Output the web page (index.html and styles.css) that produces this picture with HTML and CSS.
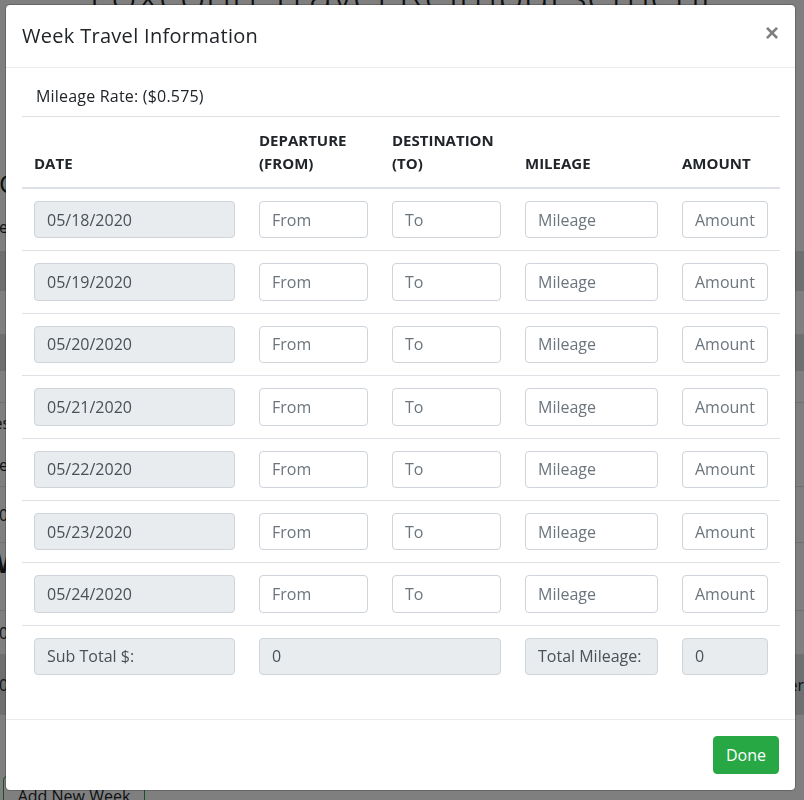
FILE: index.html
```html
<!DOCTYPE html>
<html lang="en">
<head>
<meta charset="utf-8">
<title>Week Travel Information</title>
<link rel="stylesheet" href="styles.css">
</head>
<body>
<div class="page">
  <h1 class="page-title">Foxconn Travel Reimbursement</h1>
  <div class="bg-gap g1"></div>
  <div class="bg-row h-head"><span class="bg-heading">Claim</span></div>
  <div class="bg-row h-text"><span class="bg-text">e</span></div>
  <div class="bg-row h-band dark"></div>
  <div class="bg-row h-row line"></div>
  <div class="bg-row h-band2 dark"></div>
  <div class="bg-row h-row2 line"></div>
  <div class="bg-row h-text2"><span class="bg-text cut">Desc</span></div>
  <div class="bg-row h-text3 line"><span class="bg-text">e</span></div>
  <div class="bg-row h-text4 line"><span class="bg-text">0</span></div>
  <div class="bg-row h-head2"><span class="bg-heading bold">W</span></div>
  <div class="bg-row h-row3 line"></div>
  <div class="bg-row h-text5 line"><span class="bg-text">0</span></div>
  <div class="bg-row h-text6 dark line"><span class="bg-text">0</span><span class="bg-text">er</span></div>
  <div class="bg-row h-row4"></div>
  <button class="bg-btn" type="button">Add New Week</button>
</div>

<div class="backdrop"></div>

<div class="modal">
  <div class="modal-content">
    <div class="modal-header">
      <h5 class="modal-title">Week Travel Information</h5>
      <button class="close" type="button">&times;</button>
    </div>
    <div class="modal-body">
      <label class="rate">Mileage Rate: ($0.575)</label>
      <table class="table">
        <colgroup>
          <col class="c1"><col class="c2"><col class="c3"><col class="c4"><col class="c5">
        </colgroup>
        <thead>
          <tr><th>Date</th><th>Departure (From)</th><th>Destination (To)</th><th>Mileage</th><th>Amount</th></tr>
        </thead>
        <tbody>
          <tr><td><input class="fc" value="05/18/2020" disabled></td><td><input class="fc" placeholder="From"></td><td><input class="fc" placeholder="To"></td><td><input class="fc" placeholder="Mileage"></td><td><input class="fc" placeholder="Amount"></td></tr>
          <tr><td><input class="fc" value="05/19/2020" disabled></td><td><input class="fc" placeholder="From"></td><td><input class="fc" placeholder="To"></td><td><input class="fc" placeholder="Mileage"></td><td><input class="fc" placeholder="Amount"></td></tr>
          <tr><td><input class="fc" value="05/20/2020" disabled></td><td><input class="fc" placeholder="From"></td><td><input class="fc" placeholder="To"></td><td><input class="fc" placeholder="Mileage"></td><td><input class="fc" placeholder="Amount"></td></tr>
          <tr><td><input class="fc" value="05/21/2020" disabled></td><td><input class="fc" placeholder="From"></td><td><input class="fc" placeholder="To"></td><td><input class="fc" placeholder="Mileage"></td><td><input class="fc" placeholder="Amount"></td></tr>
          <tr><td><input class="fc" value="05/22/2020" disabled></td><td><input class="fc" placeholder="From"></td><td><input class="fc" placeholder="To"></td><td><input class="fc" placeholder="Mileage"></td><td><input class="fc" placeholder="Amount"></td></tr>
          <tr><td><input class="fc" value="05/23/2020" disabled></td><td><input class="fc" placeholder="From"></td><td><input class="fc" placeholder="To"></td><td><input class="fc" placeholder="Mileage"></td><td><input class="fc" placeholder="Amount"></td></tr>
          <tr><td><input class="fc" value="05/24/2020" disabled></td><td><input class="fc" placeholder="From"></td><td><input class="fc" placeholder="To"></td><td><input class="fc" placeholder="Mileage"></td><td><input class="fc" placeholder="Amount"></td></tr>
          <tr><td><input class="fc" value="Sub Total $:" readonly></td><td colspan="2"><input class="fc" value="0" readonly></td><td><input class="fc" value="Total Mileage:" readonly></td><td><input class="fc" value="0" readonly></td></tr>
        </tbody>
      </table>
    </div>
    <div class="modal-footer">
      <button class="btn-done" type="button">Done</button>
    </div>
  </div>
</div>
</body>
</html>
```

FILE: styles.css
```css
* { box-sizing: border-box; }
html, body { margin: 0; padding: 0; }
body {
  width: 804px;
  height: 800px;
  overflow: hidden;
  position: relative;
  background: #fff;
  color: #212529;
  font-family: "Open Sans", "Noto Sans", sans-serif;
}

/* ---------- background page ---------- */
.page { width: 804px; }
.page-title {
  margin: -32px 0 0;
  text-align: center;
  font-size: 44px;
  font-weight: 300;
  line-height: 53px;
  color: #212529;
}
.bg-gap.g1 { height: 142px; }
.bg-row {
  display: flex;
  justify-content: space-between;
  align-items: center;
  font-size: 16px;
}
.bg-row.line { border-bottom: 1px solid #dee2e6; }
.bg-row.dark { background: #dcdfe2; }
.h-head { height: 40px; }
.h-text { height: 48px; }
.h-band { height: 40px; }
.h-row { height: 44px; }
.h-band2 { height: 36px; }
.h-row2 { height: 32px; }
.h-text2 { height: 40px; }
.h-text3 { height: 44px; }
.h-text4 { height: 56px; }
.h-head2 { height: 40px; }
.h-row3 { height: 28px; }
.h-text5 { height: 44px; }
.h-text6 { height: 60px; }
.h-row4 { height: 61px; }
.bg-heading { font-size: 26px; margin-left: -1px; }
.bg-heading.bold { font-weight: 700; margin-left: -4px; }
.bg-text { margin-left: -1px; color: #212529; }
.bg-text.cut { margin-left: -18px; }
.bg-btn {
  display: block;
  margin-left: 3px;
  width: 142px;
  height: 40px;
  background: #fff;
  border: 1px solid #28a745;
  border-radius: 4px;
  color: #212529;
  font-family: inherit;
  font-size: 16px;
}

/* ---------- modal ---------- */
.backdrop {
  position: fixed;
  inset: 0;
  background: rgba(0, 0, 0, 0.5);
}
.modal {
  position: fixed;
  left: 5px;
  top: 4px;
  width: 791px;
}
.modal-content {
  background: #fff;
  background-clip: padding-box;
  border: 1px solid rgba(0, 0, 0, 0.2);
  border-radius: 5px;
}
.modal-header {
  display: flex;
  align-items: flex-start;
  justify-content: space-between;
  padding: 16px;
  border-bottom: 1px solid #e9ecef;
}
.modal-title {
  margin: 0;
  font-size: 20px;
  font-weight: 400;
  line-height: 30px;
  letter-spacing: 0.3px;
  color: #212529;
}
.close {
  margin: -16px -16px -16px auto;
  padding: 16px;
  background: transparent;
  border: 0;
  font-family: "Liberation Sans", Arial, sans-serif;
  font-size: 24px;
  font-weight: 700;
  line-height: 24px;
  color: #000;
  opacity: 0.5;
}
.modal-body { padding: 16px; }
.rate {
  display: inline-block;
  margin-bottom: 8px;
  padding-left: 14px;
  font-size: 16px;
  line-height: 24px;
  letter-spacing: 0.2px;
  color: #212529;
}
.table {
  width: 100%;
  border-collapse: collapse;
  table-layout: fixed;
  margin-bottom: 16px;
}
.c1 { width: 225px; }
.c2 { width: 133px; }
.c3 { width: 133px; }
.c4 { width: 157px; }
.c5 { width: 110px; }
.table th {
  padding: 12px;
  text-align: left;
  vertical-align: bottom;
  border-top: 1px solid #dee2e6;
  border-bottom: 2px solid #dee2e6;
  font-size: 15px;
  font-weight: 700;
  line-height: 23px;
  text-transform: uppercase;
  color: #212529;
}
.table td {
  padding: 12px;
  vertical-align: top;
  border-top: 1px solid #dee2e6;
}
.fc {
  display: block;
  width: 100%;
  height: 37.4px;
  padding: 6px 12px;
  font-family: inherit;
  font-size: 16px;
  line-height: 24px;
  color: #495057;
  background: #fff;
  border: 1px solid #ced4da;
  border-radius: 4px;
}
.fc::placeholder { color: #6c757d; opacity: 1; }
.fc:disabled, .fc[readonly] { background: #e9ecef; color: #495057; }
.modal-footer {
  display: flex;
  justify-content: flex-end;
  padding: 16px;
  border-top: 1px solid #e9ecef;
}
.btn-done {
  padding: 6px 12px;
  height: 38px;
  background: #28a745;
  border: 1px solid #28a745;
  border-radius: 4px;
  color: #fff;
  font-family: inherit;
  font-size: 16px;
  line-height: 24px;
}
```
